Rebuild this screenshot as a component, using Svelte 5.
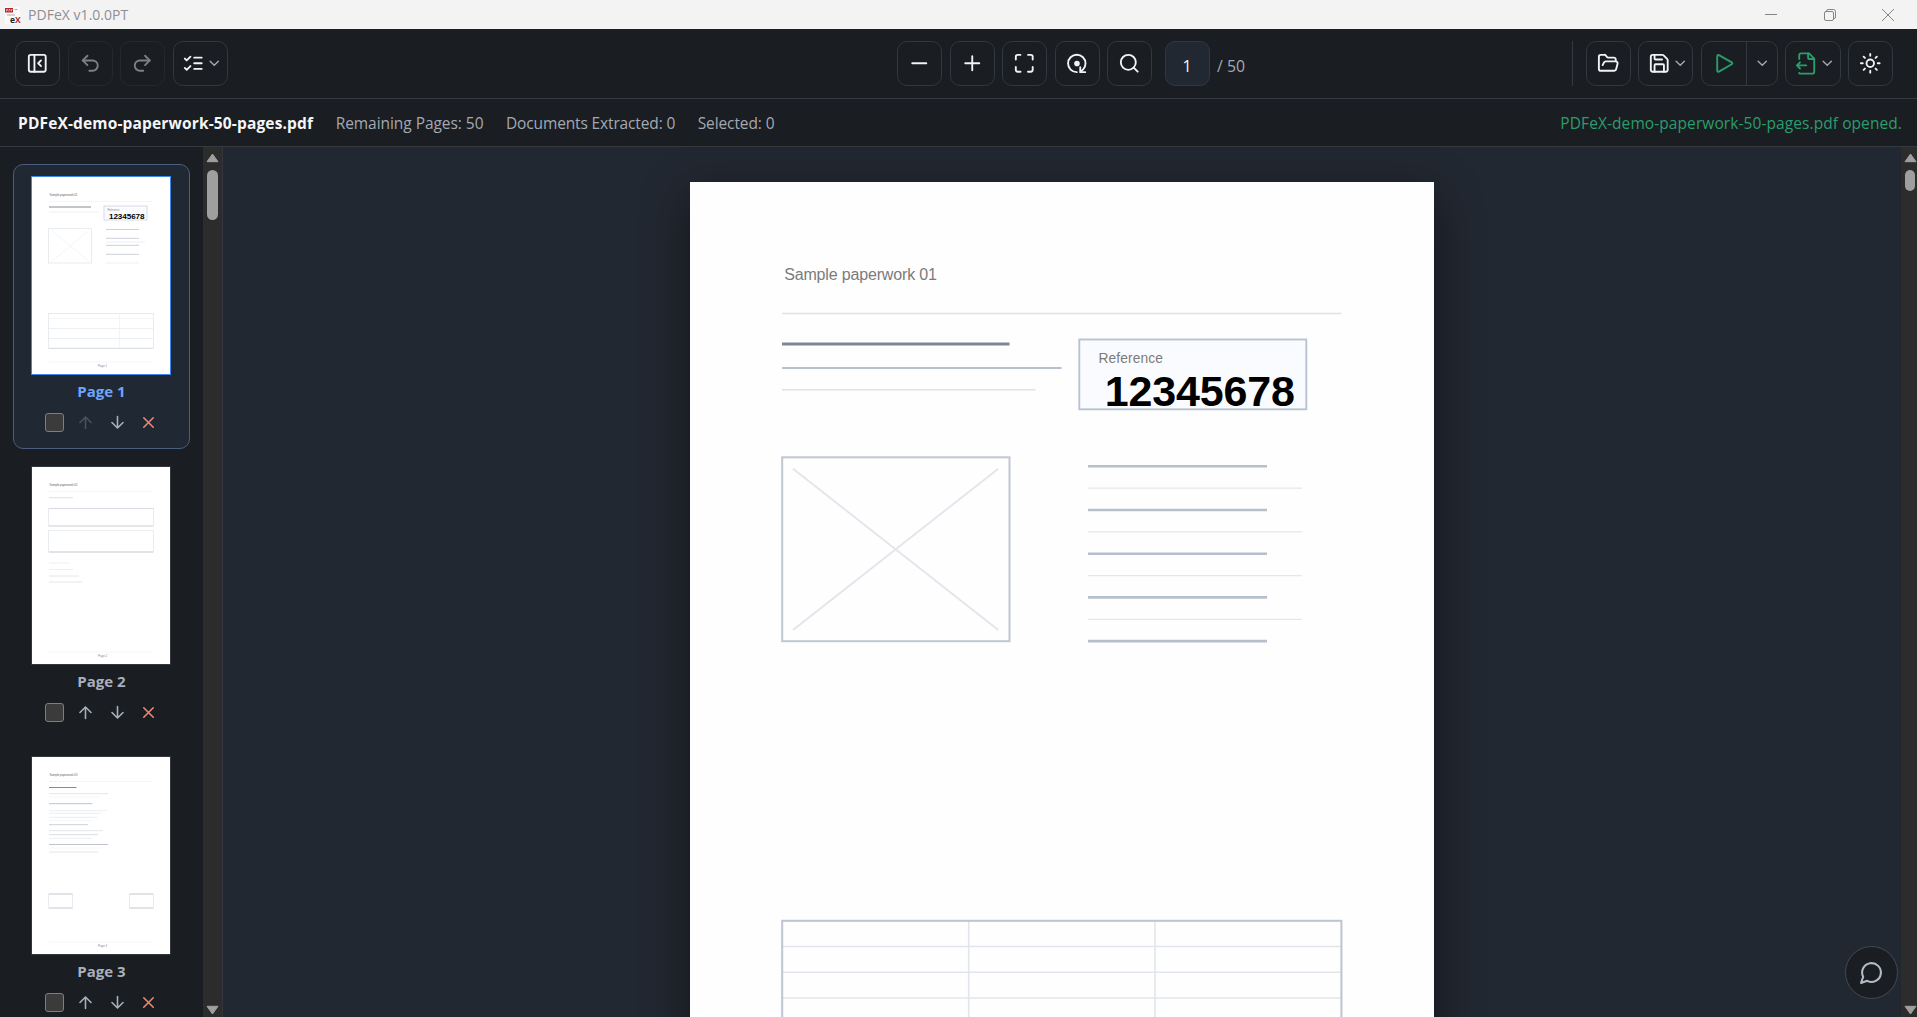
<script>
	const DARK = '#858b95';
	const MID = '#ccd1d9';
	const LIGHT = '#eceff3';

	let fileName = 'PDFeX-demo-paperwork-50-pages.pdf';
	let totalPages = 50;
	let extracted = 0;
	let current = 1;
	let sidebarOpen = true;

	// lines: x1, x2, y, colour   boxes: x, y, width, height
	let pages = [
		{
			n: 1,
			checked: false,
			lines: [
				[18, 60, 31, DARK], [18, 68, 36, LIGHT],
				[75, 108, 53.5, MID], [75, 108, 62.3, MID], [75, 114, 66, LIGHT], [75, 108, 69.3, MID],
				[75, 108, 78.3, MID], [75, 108, 87, LIGHT],
				[18, 122, 142.5, '#f4f6f8'], [18, 122, 152.5, LIGHT], [18, 122, 162.5, LIGHT], [18, 122, 172.3, '#d9dde3'],
			],
			boxes: [[17.5, 52.5, 43, 34.5], [17.5, 137.5, 105, 35]],
		},
		{
			n: 2,
			checked: false,
			lines: [
				[18, 42, 31.7, '#dcdfe4'], [18, 122, 42.5, '#d9dde3'], [18, 122, 60, '#d3d8de'],
				[18, 122, 64.5, LIGHT], [18, 122, 86, MID],
				[18, 38, 97, LIGHT], [18, 42, 103.5, LIGHT], [18, 48, 110, '#e3e6ea'], [18, 51, 116, '#e3e6ea'],
			],
			boxes: [[17.5, 42.5, 105, 17.5], [17.5, 64.5, 105, 21.5]],
		},
		{
			n: 3,
			checked: false,
			lines: [
				[18, 45.5, 31.5, DARK], [18, 77, 37.7, '#e3e6ea'], [18, 70, 41, '#f4f6f8'], [18, 61.5, 47.7, '#bfc4cc'],
				[18, 76, 54.7, LIGHT], [18, 70, 57.3, LIGHT], [18, 66, 61.3, LIGHT], [18, 61, 64.7, '#f4f6f8'],
				[18, 57, 68.7, MID], [18, 72, 74.7, '#e3e6ea'], [18, 67, 78.7, '#d9dde3'], [18, 61, 82.3, LIGHT],
				[18, 77, 88.5, '#bfc4cc'], [18, 70, 92, '#f4f6f8'], [18, 67, 96, '#e3e6ea'],
				[18, 41.5, 138, MID], [18, 41.5, 152, MID], [98.5, 122, 138, MID], [98.5, 122, 152, MID],
			],
			boxes: [[17.5, 138, 24, 14], [98.5, 138, 24, 14]],
		},
	];

	let detailRows = [0, 1, 2, 3, 4, 5, 6, 7, 8];

	$: selected = pages.filter((p) => p.checked).length;

	function move(i, dir) {
		const j = i + dir;
		if (j < 0 || j >= pages.length) return;
		[pages[i], pages[j]] = [pages[j], pages[i]];
		pages = pages;
	}
	function removePage(i) {
		pages = pages.filter((_, k) => k !== i);
		totalPages -= 1;
	}
</script>

<div class="window">
	<div class="titlebar">
		<svg class="logo" width="18" height="18" viewBox="0 0 18 18">
			<rect x="1" y="0" width="15" height="17" fill="#fafafa" />
			<rect x="1" y="1" width="8" height="4.5" fill="#b3262c" />
			<path d="M2.5 4.5v-2h1v1M5 4.5v-2h1l.5 1M7.5 4.5v-2h1" fill="none" stroke="#f6dcdc" stroke-width=".7" />
			<path d="M10.5 2.5h3M3 8h8" stroke="#aaa" stroke-width="1" />
			<text x="6" y="16" class="logo-e">e</text>
			<text x="11" y="16" class="logo-x">X</text>
		</svg>
		<span class="app-name">PDFeX v1.0.0PT</span>
		<div class="win-buttons">
			<svg width="12" height="12" viewBox="0 0 12 12"><path d="M0 5.5h12" /></svg>
			<svg width="12" height="12" viewBox="0 0 12 12"><rect x=".5" y="2.5" width="9" height="9" rx="1.5" /><path d="M2.5 2.5V2A1.5 1.5 0 0 1 4 .5h5.5a2 2 0 0 1 2 2V8a1.5 1.5 0 0 1-1.5 1.5" /></svg>
			<svg width="12" height="12" viewBox="0 0 12 12"><path d="M0 0l12 12M12 0L0 12" /></svg>
		</div>
	</div>

	<div class="toolbar">
		<div class="group left">
			<button class="btn" aria-label="Toggle sidebar" on:click={() => (sidebarOpen = !sidebarOpen)}>
				<svg class="icon" viewBox="0 0 24 24"><rect x="3" y="3" width="18" height="18" rx="2" /><path d="M9 3v18M16 15l-3-3 3-3" /></svg>
			</button>
			<button class="btn off" aria-label="Undo">
				<svg class="icon" viewBox="0 0 24 24"><path d="M9 14 4 9l5-5" /><path d="M4 9h10.5a5.5 5.5 0 0 1 0 11H11" /></svg>
			</button>
			<button class="btn off" aria-label="Redo">
				<svg class="icon" viewBox="0 0 24 24"><path d="m15 14 5-5-5-5" /><path d="M20 9H9.5a5.5 5.5 0 0 0 0 11H13" /></svg>
			</button>
			<button class="btn wide" aria-label="Select pages">
				<svg class="icon" viewBox="0 0 24 24"><path d="m3 17 2 2 4-4M3 7l2 2 4-4M13 6h8M13 12h8M13 18h8" /></svg>
				<svg class="chevron" viewBox="0 0 24 24"><path d="m6 9 6 6 6-6" /></svg>
			</button>
		</div>

		<div class="group center">
			<button class="btn" aria-label="Zoom out">
				<svg class="icon" viewBox="0 0 24 24"><path d="M4.5 12h15" /></svg>
			</button>
			<button class="btn" aria-label="Zoom in">
				<svg class="icon" viewBox="0 0 24 24"><path d="M4.5 12h15M12 4.5v15" /></svg>
			</button>
			<button class="btn" aria-label="Fit page">
				<svg class="icon" viewBox="0 0 24 24"><path d="M8 3H5a2 2 0 0 0-2 2v3M21 8V5a2 2 0 0 0-2-2h-3M3 16v3a2 2 0 0 0 2 2h3M16 21h3a2 2 0 0 0 2-2v-3" /></svg>
			</button>
			<button class="btn" aria-label="Rotate">
				<svg class="icon" viewBox="0 0 24 24"><path d="M11.5 21.5a9.3 9.3 0 1 1 9.3-9.3c0 2.3-.9 4.5-2.3 6l-3 3" /><path d="M15.2 16.3v5.2h5.3" /><circle class="dot" cx="11.7" cy="12.2" r="2" /></svg>
			</button>
			<button class="btn" aria-label="Search">
				<svg class="icon" viewBox="0 0 24 24"><circle cx="11" cy="11" r="8" /><path d="m21 21-4.3-4.3" /></svg>
			</button>
			<input class="page-input" type="text" aria-label="Page number" bind:value={current} />
			<span class="total">/ {totalPages}</span>
		</div>

		<div class="group right">
			<span class="sep"></span>
			<button class="btn" aria-label="Open">
				<svg class="icon" viewBox="0 0 24 24"><path d="m6 14 1.5-2.9A2 2 0 0 1 9.24 10H20a2 2 0 0 1 1.94 2.5l-1.54 6a2 2 0 0 1-1.95 1.5H4a2 2 0 0 1-2-2V5a2 2 0 0 1 2-2h3.9a2 2 0 0 1 1.69.9l.81 1.2a2 2 0 0 0 1.67.9H18a2 2 0 0 1 2 2v2" /></svg>
			</button>
			<button class="btn wide" aria-label="Save">
				<svg class="icon" viewBox="0 0 24 24"><path d="M15.2 3a2 2 0 0 1 1.4.6l3.8 3.8a2 2 0 0 1 .6 1.4V19a2 2 0 0 1-2 2H5a2 2 0 0 1-2-2V5a2 2 0 0 1 2-2z" /><path d="M17 21v-7a1 1 0 0 0-1-1H8a1 1 0 0 0-1 1v7M7 3v4a1 1 0 0 0 1 1h7" /></svg>
				<svg class="chevron" viewBox="0 0 24 24"><path d="m6 9 6 6 6-6" /></svg>
			</button>
			<div class="split">
				<button class="part green" aria-label="Run">
					<svg class="icon" viewBox="0 0 24 24"><path d="M4.5 4.3a1.2 1.2 0 0 1 1.8-1L20 11a1.2 1.2 0 0 1 0 2.1L6.3 20.9a1.2 1.2 0 0 1-1.8-1z" /></svg>
				</button>
				<button class="part more" aria-label="Run options">
					<svg class="chevron" viewBox="0 0 24 24"><path d="m6 9 6 6 6-6" /></svg>
				</button>
			</div>
			<button class="btn wide green" aria-label="Extract">
				<svg class="icon" viewBox="0 0 24 24"><path d="M14 1.5v5a1 1 0 0 0 1 1h5.5" /><path d="M4.500 7.500V3.500a2 2 0 0 1 2-2H15l5.500 5.500v14a2 2 0 0 1-2 2H6a2 2 0 0 1-1.500-.6" /><path d="M2 14.300h10M5.300 11 2 14.300l3.300 3.300" /></svg>
				<svg class="chevron" viewBox="0 0 24 24"><path d="m6 9 6 6 6-6" /></svg>
			</button>
			<button class="btn" aria-label="Theme">
				<svg class="icon" viewBox="0 0 24 24"><circle cx="12" cy="12" r="4" /><path d="M12 2v2M12 20v2M4.930 4.930l1.410 1.410M17.660 17.660l1.410 1.410M2 12h2M20 12h2M6.340 17.660l-1.410 1.410M19.070 4.930l-1.410 1.410" /></svg>
			</button>
		</div>
	</div>

	<div class="status">
		<span class="file">{fileName}</span>
		<span class="remaining">Remaining Pages: {totalPages}</span>
		<span class="docs">Documents Extracted: {extracted}</span>
		<span class="selected">Selected: {selected}</span>
		<span class="message">{fileName} opened.</span>
	</div>

	<div class="body">
		{#if sidebarOpen}
		<div class="sidebar">
			{#each pages as page, i}
				<div class="card" class:active={page.n == current}>
					<div class="thumb">
						<svg viewBox="0 0 140 199">
							<text x="18.5" y="20" font-size="3.2" textLength="28" fill="#6f6f6f">Sample paperwork 0{page.n}</text>
							<path d="M18 25.5h104M18 186h104" stroke="#f1f3f5" stroke-width=".8" />
							{#each page.boxes as [x, y, w, h]}
								<rect {x} {y} width={w} height={h} fill="none" stroke="#e6e9ee" stroke-width=".9" />
							{/each}
							{#each page.lines as [x1, x2, y, c]}
								<line {x1} {x2} y1={y} y2={y} stroke={c} />
							{/each}
							{#if page.n == 1}
								<path d="M21 55l36.500 30M57.500 55 21 85M88.500 138v34" stroke="#eff1f4" stroke-width=".8" fill="none" />
								<rect x="73" y="30" width="43" height="14" fill="#fafbff" stroke="#d3d8e0" stroke-width=".9" />
								<text x="76.5" y="35" font-size="2.6" fill="#888">Reference</text>
								<text x="78" y="43" font-size="8.1" font-weight="bold" textLength="35.5">12345678</text>
							{/if}
							<text x="67" y="191" font-size="2.9" fill="#888">Page {page.n}</text>
						</svg>
					</div>
					<div class="label">Page {page.n}</div>
					<div class="actions">
						<input type="checkbox" aria-label="Select page" bind:checked={page.checked} />
						<button class:dim={i == 0} aria-label="Move up" on:click={() => move(i, -1)}>
							<svg viewBox="0 0 24 24"><path d="m5 12 7-7 7 7M12 19.5V5" /></svg>
						</button>
						<button aria-label="Move down" on:click={() => move(i, 1)}>
							<svg viewBox="0 0 24 24"><path d="M12 4.5V19M19 12l-7 7-7-7" /></svg>
						</button>
						<button class="remove" aria-label="Remove" on:click={() => removePage(i)}>
							<svg viewBox="0 0 24 24"><path d="M18 6 6 18M6 6l12 12" /></svg>
						</button>
					</div>
				</div>
			{/each}
		</div>
		<div class="scroll side">
			<svg width="13" height="10" viewBox="0 0 13 10"><path d="M6.5 1 12 8.7H1z" /></svg>
			<div class="bar"></div>
			<svg class="down" width="13" height="10" viewBox="0 0 13 10"><path d="M6.5 9 12 1.3H1z" /></svg>
		</div>
		{/if}

		<div class="viewer">
			<div class="sheet">
				<svg width="744" height="1053" viewBox="0 0 744 1053" fill="none">
					<text x="94.2" y="97.5" font-size="16" textLength="152.7" fill="#7b7b7b">Sample paperwork 01</text>
					<path d="M92 131.5h559.5" stroke="#dde2e8" stroke-width="1.3" />
					<path d="M92 161.9h227.5" stroke="#7c879a" stroke-width="3" />
					<path d="M92 186h279.6" stroke="#b7c1ce" stroke-width="2.2" />
					<path d="M92 207.8h253.5" stroke="#dde2e8" stroke-width="1.4" />

					<rect x="389.3" y="157.5" width="227" height="69.8" fill="#fafbfe" stroke="#b9c3d0" stroke-width="1.9" />
					<text x="408.5" y="181" font-size="13.8" textLength="64.4" fill="#7b7b7b">Reference</text>
					<text x="414.8" y="224.300" font-size="43" font-weight="bold" textLength="190" fill="#000">12345678</text>

					<rect x="92.2" y="275.3" width="227.3" height="183.9" stroke="#bfc7d3" stroke-width="2" />
					<path d="M103 286.700 308.300 448M308.300 286.700 103 448" stroke="#e2e5eb" stroke-width="1.8" />

					{#each detailRows as r}
						{#if r % 2 == 0}
							<line x1="398" x2="577" y1={284.2 + r * 21.87} y2={284.2 + r * 21.87} stroke="#b7bfcc" stroke-width="2.6" />
						{:else}
							<line x1="398" x2="612" y1={284.2 + r * 21.87} y2={284.2 + r * 21.87} stroke="#e4e7ec" stroke-width="1.3" />
						{/if}
					{/each}

					<path d="M92 764.500h559M92 790.200h559M92 816h559M92 841.700h559M92 867.400h559M92 893.200h559M278.700 739v180M465 739v180" stroke="#e2e6ec" stroke-width="1.6" />
					<rect x="92.2" y="738.8" width="559.2" height="180.2" stroke="#bcc5d1" stroke-width="2" />
				</svg>
			</div>
			<button class="chat" aria-label="Feedback">
				<svg viewBox="0 0 24 24"><path d="M7.9 20A9 9 0 1 0 4 16.100L2 22Z" /></svg>
			</button>
		</div>
		<div class="scroll main">
			<svg width="13" height="10" viewBox="0 0 13 10"><path d="M6.5 1 12 8.7H1z" /></svg>
			<div class="bar"></div>
			<svg class="down" width="13" height="10" viewBox="0 0 13 10"><path d="M6.5 9 12 1.3H1z" /></svg>
		</div>
	</div>
</div>

<style>
	:global(body) {
		margin: 0;
		overflow: hidden;
		background: #1a1d21;
	}
	.window {
		height: 100vh;
		display: flex;
		flex-direction: column;
		font-family: "Open Sans", "Noto Sans", sans-serif;
		color: #f1f3f6;
		background: #1a1d21;
	}
	button {
		padding: 0;
		border: none;
		background: none;
		color: inherit;
		cursor: pointer;
	}
	svg {
		display: block;
		flex: none;
	}
	.titlebar {
		height: 29px;
		flex: none;
		display: flex;
		align-items: center;
		background: #f3f3f3;
		padding: 0 23px 0 4px;
	}
	.logo {
		margin-top: 3px;
	}
	.logo-e, .logo-x {
		font: bold 8.5px "Open Sans", sans-serif;
		fill: #222;
	}
	.logo-x {
		fill: #b3262c;
	}
	.app-name {
		margin-left: 6px;
		font-size: 14px;
		letter-spacing: 0.03px;
		color: #8f8f8f;
	}
	.win-buttons {
		margin-left: auto;
		display: flex;
		gap: 46.5px;
	}
	.win-buttons svg {
		fill: none;
		stroke: #858585;
	}
	.toolbar {
		height: 69px;
		flex: none;
		display: grid;
		grid-template-columns: 882px 1fr auto;
		align-items: center;
		border-bottom: 1px solid #363a40;
		padding: 0 24px 0 15px;
	}
	.group {
		display: flex;
		align-items: center;
		gap: 7.5px;
	}
	.btn, .split, .page-input {
		box-sizing: border-box;
		width: 45px;
		height: 45px;
		border: 1px solid #33373e;
		border-radius: 10px;
		display: flex;
		align-items: center;
		justify-content: center;
	}
	.btn.wide {
		width: 55.2px;
		justify-content: flex-start;
		gap: 1.5px;
		padding-left: 8.5px;
	}
	.icon, .chevron {
		width: 22.5px;
		height: 22.5px;
		fill: none;
		stroke: currentColor;
		stroke-width: 2;
		stroke-linecap: round;
		stroke-linejoin: round;
	}
	.chevron {
		width: 16.5px;
		height: 16.5px;
		stroke: #a3a9b3;
	}
	.dot {
		fill: currentColor;
	}
	.off {
		border-color: #25282d;
		color: #7d8186;
	}
	.green {
		color: #2a9d6c;
	}
	.page-input {
		margin-left: 5px;
		padding: 4px 0 0;
		background: #222831;
		color: #f1f3f6;
		font: 16px "Open Sans", sans-serif;
		text-align: center;
	}
	.total {
		color: #a3a9b3;
		font-size: 15.8px;
		padding-top: 4px;
	}
	.sep {
		width: 1px;
		height: 45px;
		background: #363a40;
		margin-right: 5.5px;
	}
	.split {
		width: 77px;
		align-items: stretch;
	}
	.part {
		width: 45px;
		display: flex;
		align-items: center;
		justify-content: center;
	}
	.more {
		width: 31px;
		border-left: 1px solid #33373e;
	}
	.status {
		box-sizing: border-box;
		height: 48px;
		flex: none;
		display: flex;
		align-items: center;
		border-bottom: 1px solid #363a40;
		padding: 1px 15px 0 18px;
		font-size: 15.5px;
		color: #a3a9b3;
		gap: 22.5px;
		white-space: nowrap;
	}
	.file {
		font-weight: bold;
		letter-spacing: 0.15px;
		color: #f4f6f9;
	}
	.remaining {
		letter-spacing: -0.05px;
	}
	.docs {
		letter-spacing: -0.14px;
	}
	.selected {
		letter-spacing: -0.1px;
	}
	.message {
		margin-left: auto;
		letter-spacing: 0.08px;
		color: #2a9d6c;
	}
	.body {
		flex: 1;
		min-height: 0;
		display: flex;
	}
	.sidebar {
		width: 203px;
		flex: none;
		box-sizing: border-box;
		padding: 17px 13px 0;
		display: flex;
		flex-direction: column;
		gap: 5px;
		overflow: hidden;
	}
	.card {
		box-sizing: border-box;
		height: 285px;
		flex: none;
		border: 1px solid transparent;
		border-radius: 10px;
		display: flex;
		flex-direction: column;
		align-items: center;
		padding: 11px 0 0;
	}
	.card.active {
		background: #202834;
		border-color: #4a5d80;
	}
	.thumb {
		width: 138px;
		height: 197px;
		margin-right: 1px;
		border: 1px solid #33373d;
		background: white;
	}
	.active .thumb {
		border-color: #3f86e6;
	}
	.thumb svg {
		width: 140px;
		height: 199px;
		margin: -1px;
	}
	.thumb text, .sheet text {
		font-family: "Liberation Sans", Arial, sans-serif;
	}
	.label {
		margin-top: 4px;
		height: 24px;
		line-height: 24px;
		font-size: 15px;
		font-weight: bold;
		color: #a9b0bc;
	}
	.active .label {
		color: #6ea5fb;
	}
	.actions {
		margin: 7px 0 0 3px;
		display: flex;
		align-items: center;
		gap: 6.5px;
	}
	.actions input {
		appearance: none;
		box-sizing: border-box;
		width: 19px;
		height: 19px;
		margin: 0 2.5px 0 0;
		border: 1px solid #7e7e7e;
		border-radius: 3px;
		background: #3b3b3b;
	}
	.actions button {
		width: 25px;
		height: 25px;
		display: flex;
		align-items: center;
		justify-content: center;
		color: #a9b0bc;
	}
	.actions svg {
		width: 19px;
		height: 19px;
		fill: none;
		stroke: currentColor;
		stroke-width: 2;
		stroke-linecap: round;
		stroke-linejoin: round;
	}
	.actions .dim {
		color: #4b525d;
	}
	.actions .remove {
		color: #f0876f;
	}
	.scroll {
		width: 19px;
		flex: none;
		box-sizing: border-box;
		background: #2c2c2c;
		display: flex;
		flex-direction: column;
		align-items: center;
		padding: 6px 0 2px;
	}
	.scroll.side {
		width: 20px;
		border-right: 1px solid #33373d;
	}
	.scroll.main {
		width: 16px;
		padding-left: 2px;
	}
	.scroll path {
		fill: #9f9f9f;
		stroke: #9f9f9f;
		stroke-linejoin: round;
	}
	.bar {
		width: 11px;
		height: 50px;
		margin-top: 7px;
		border-radius: 6px;
		background: #9f9f9f;
	}
	.main .bar {
		width: 10px;
		height: 21px;
	}
	.down {
		margin-top: auto;
	}
	.viewer {
		position: relative;
		flex: 1;
		background: #222831;
		overflow: hidden;
		display: flex;
		justify-content: center;
		padding-top: 35px;
	}
	.sheet {
		width: 744px;
		height: 1053px;
		flex: none;
		background: #fefefe;
		box-shadow: 0 14px 45px rgba(0, 0, 0, 0.45);
	}
	.chat {
		position: absolute;
		right: 3px;
		bottom: 18px;
		box-sizing: border-box;
		width: 53px;
		height: 53px;
		border: 1px solid #454a52;
		border-radius: 50%;
		background: #1a1d21;
		display: flex;
		align-items: center;
		justify-content: center;
		color: #b4bac8;
	}
	.chat svg {
		width: 25px;
		height: 25px;
		fill: none;
		stroke: currentColor;
		stroke-width: 2;
		stroke-linecap: round;
		stroke-linejoin: round;
	}
</style>
